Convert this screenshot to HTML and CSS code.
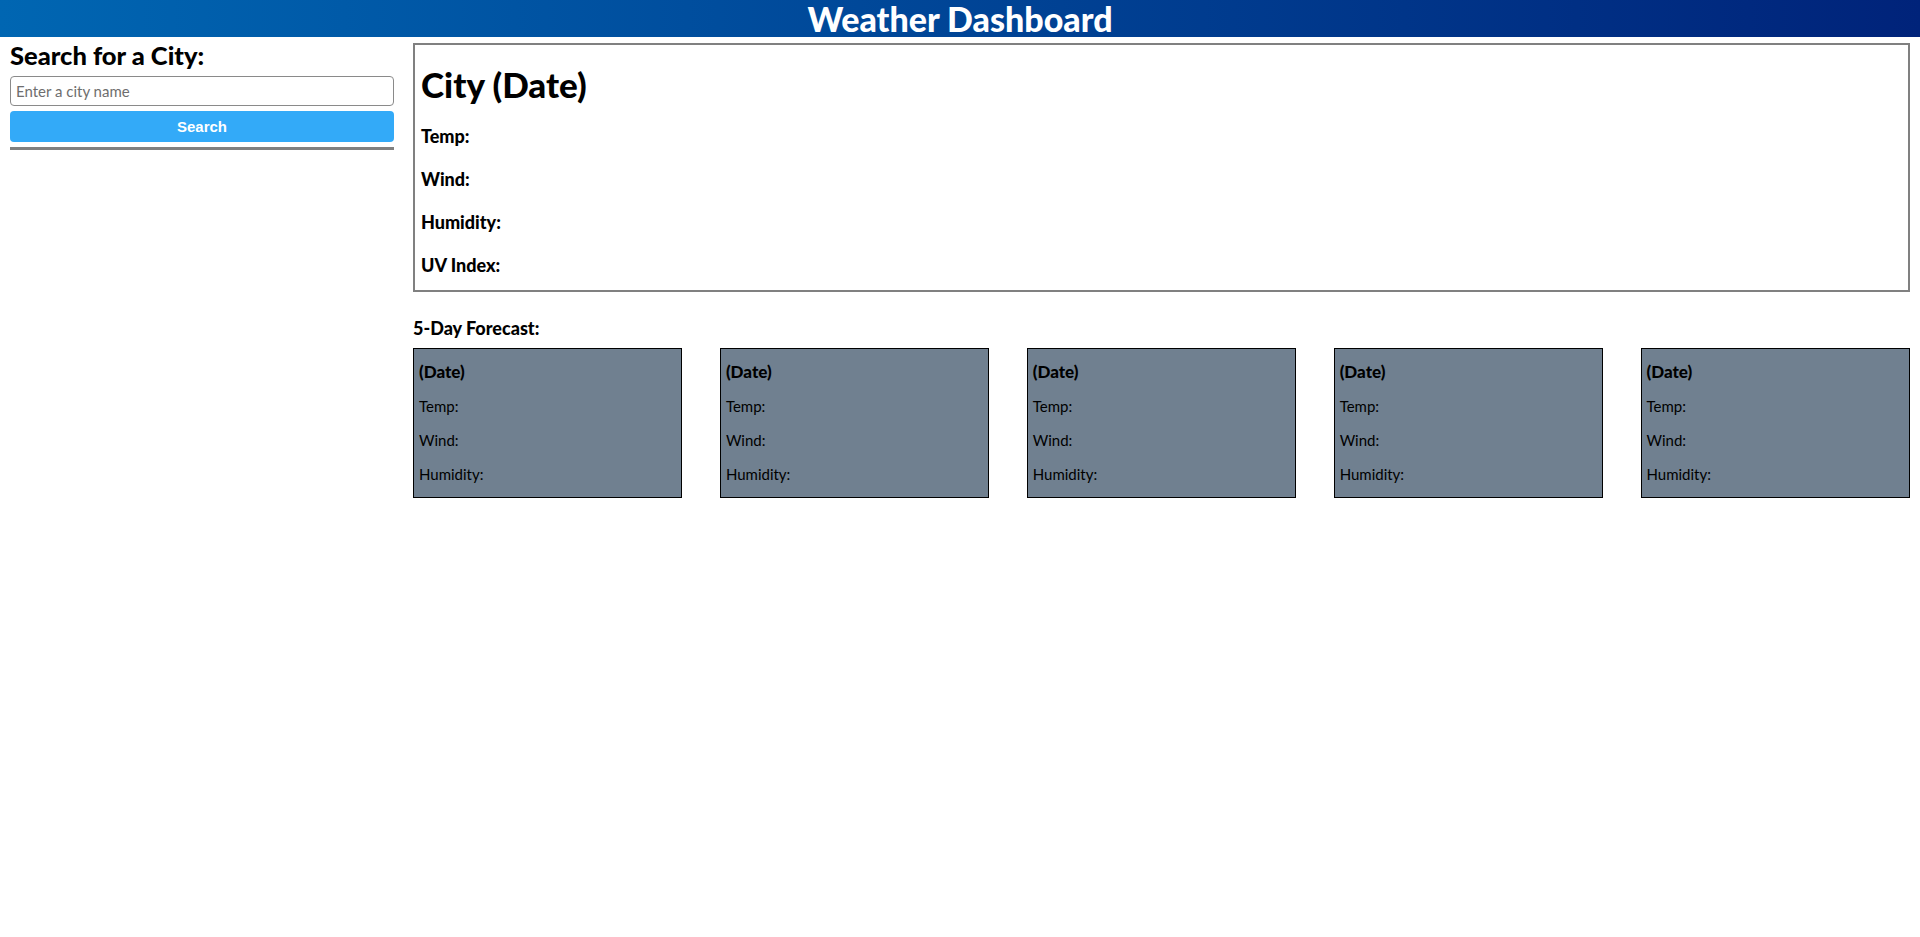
FILE: index.html
```html
<!DOCTYPE html>
<html lang="en">
<head>
<meta charset="UTF-8">
<title>Weather Dashboard</title>
<link rel="stylesheet" href="styles.css">
</head>
<body>
<header class="site-header">
  <h1 class="site-title">Weather Dashboard</h1>
</header>
<div class="layout">
  <aside class="sidebar">
    <h2 class="sidebar-title">Search for a City:</h2>
    <input class="city-input" type="text" placeholder="Enter a city name">
    <button class="search-btn" type="button">Search</button>
    <hr class="divider">
  </aside>
  <main class="content">
    <section class="current">
      <h2 class="current-title">City (Date)</h2>
      <p class="current-item">Temp:</p>
      <p class="current-item">Wind:</p>
      <p class="current-item">Humidity:</p>
      <p class="current-item last">UV Index:</p>
    </section>
    <h3 class="forecast-title">5-Day Forecast:</h3>
    <div class="forecast">
      <div class="card"><p class="card-date">(Date)</p><p class="card-item">Temp:</p><p class="card-item">Wind:</p><p class="card-item">Humidity:</p></div>
      <div class="card"><p class="card-date">(Date)</p><p class="card-item">Temp:</p><p class="card-item">Wind:</p><p class="card-item">Humidity:</p></div>
      <div class="card"><p class="card-date">(Date)</p><p class="card-item">Temp:</p><p class="card-item">Wind:</p><p class="card-item">Humidity:</p></div>
      <div class="card"><p class="card-date">(Date)</p><p class="card-item">Temp:</p><p class="card-item">Wind:</p><p class="card-item">Humidity:</p></div>
      <div class="card"><p class="card-date">(Date)</p><p class="card-item">Temp:</p><p class="card-item">Wind:</p><p class="card-item">Humidity:</p></div>
    </div>
  </main>
</div>
</body>
</html>
```
FILE: styles.css
```css
* { box-sizing: border-box; }
body {
  margin: 0;
  font-family: Lato, "Open Sans", sans-serif;
  color: #000;
  background: #fff;
}
.site-header {
  background: linear-gradient(to right, #0066b2, #00237a);
  height: 37px;
  display: flex;
  align-items: center;
  justify-content: center;
}
.site-title {
  margin: 0;
  color: #fff;
  font-size: 34px;
  font-weight: 900;
  line-height: 37px;
}
.layout {
  display: flex;
  padding: 0 10px;
  gap: 19px;
}
.sidebar {
  width: 384px;
  flex: none;
  display: flex;
  flex-direction: column;
}
.sidebar-title {
  margin: 4px 0 7px;
  font-size: 25.5px;
  font-weight: 900;
  line-height: 28px;
}
.city-input {
  height: 30px;
  border: 1px solid #8a8a8a;
  border-radius: 4px;
  padding: 0 5px;
  font-family: Lato, sans-serif;
  font-size: 15px;
}
.city-input::placeholder { color: #6e6e6e; }
.search-btn {
  margin-top: 5px;
  height: 31px;
  border: none;
  border-radius: 4px;
  background: #33aaf8;
  color: #fff;
  font-family: "Liberation Sans", Arial, sans-serif;
  font-weight: bold;
  font-size: 15px;
}
.divider {
  margin: 5px 0 0;
  border: none;
  height: 3px;
  background: #808080;
}
.content {
  flex: 1;
  min-width: 0;
}
.current {
  margin-top: 6px;
  border: 2px solid #808080;
  padding: 0 6px 14px;
}
.current-title {
  margin: 20px 0 0;
  font-size: 35px;
  font-weight: 900;
  line-height: 39px;
}
.current-item {
  margin: 21px 0 0;
  font-size: 18px;
  font-weight: 900;
  line-height: 22px;
}
.forecast-title {
  margin: 25px 0 9px;
  font-size: 18px;
  font-weight: 900;
  line-height: 22px;
}
.forecast {
  display: flex;
  justify-content: space-between;
}
.card {
  width: 18%;
  height: 150px;
  background: #708090;
  border: 1px solid #000;
  padding: 14px 5px 0;
  display: flex;
  flex-direction: column;
  gap: 16px;
}
.card p { margin: 0; line-height: 18px; }
.card-date { font-size: 17px; font-weight: 900; }
.card-item { font-size: 15px; }
```
